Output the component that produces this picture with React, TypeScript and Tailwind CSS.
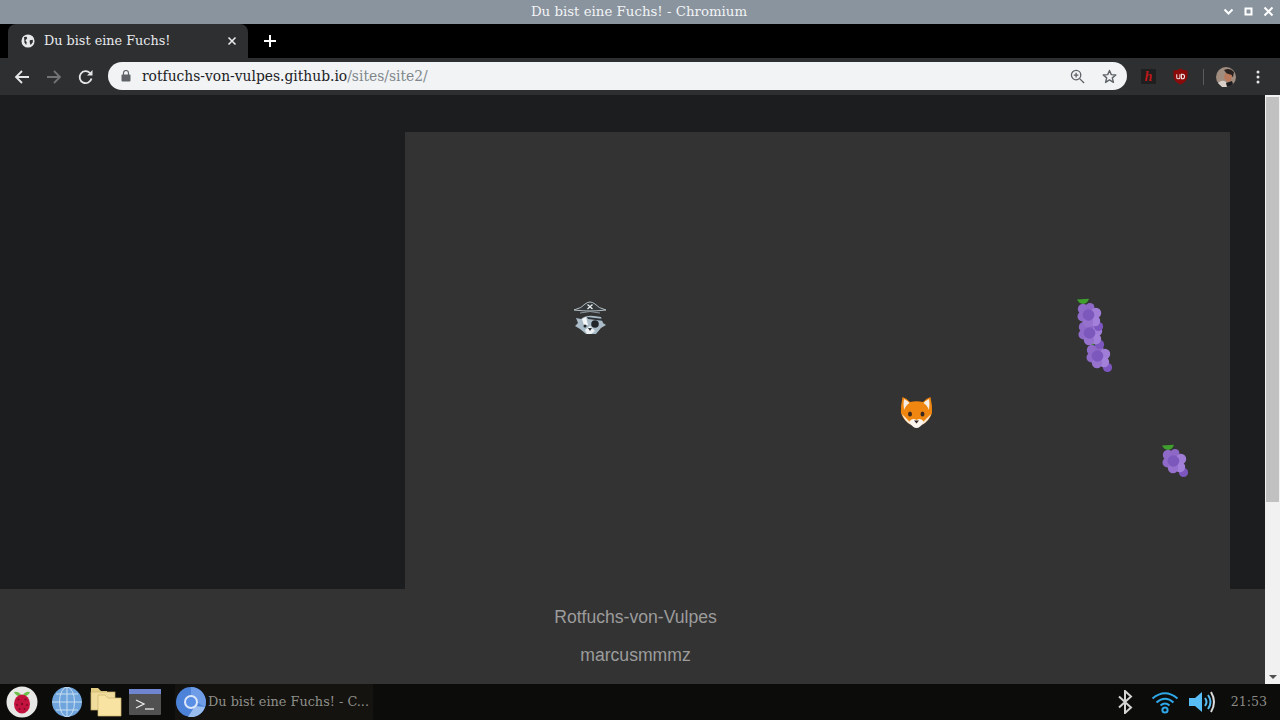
import React from "react";

function Grape({ className }: { className: string }) {
  return (
    <svg viewBox="0 0 28 34" className={className}>
      <path d="M1 1.500 L13 0.800 Q11.500 5.500 7 6 Q3 5.500 1 1.500Z" fill="#3fa02e" />
      <circle cx="22.500" cy="28.500" r="4.600" fill="#7d56c0" />
      <g fill="#9a76d1">
        <circle cx="7" cy="11" r="5.200" fill="#8f6ac8" />
        <circle cx="14" cy="9.500" r="4.500" fill="#8d68c6" />
        <circle cx="20" cy="15" r="5.200" fill="#a07ed8" />
        <circle cx="6.500" cy="18.500" r="5" fill="#8f6ac8" />
        <circle cx="19" cy="23" r="5.200" fill="#a380da" />
        <circle cx="12" cy="24" r="5.200" fill="#9671ce" />
      </g>
      <circle cx="12.500" cy="17" r="5.800" fill="#7c58bd" />
    </svg>
  );
}

function Fox({ className }: { className: string }) {
  return (
    <svg viewBox="0 0 34 34" className={className}>
      <path d="M3.500 1 Q8 2.500 11 6 Q17.500 4.500 24 6 Q27 2.500 31.500 1 Q33.500 10 33 17 Q31 24 24 28 Q17.500 32 11 28 Q4 24 2 17 Q1.500 10 3.500 1Z" fill="#ee860f" />
      <path d="M5 3 Q9 5 10.500 7 Q7 9 5 14 Q4 8 5 3Z M30 3 Q26 5 24.500 7 Q28 9 30 14 Q31 8 30 3Z" fill="#f5efe8" />
      <path d="M3 18 Q6 21 10 25 L12 29 Q5 25 3 18Z M32 18 Q29 21 25 25 L23 29 Q30 25 32 18Z" fill="#fbe7cf" />
      <path d="M10 26 Q13 21 17.500 24 Q22 21 25 26 Q21 32 17.500 32 Q14 32 10 26Z" fill="#fbf6ef" />
      <ellipse cx="11" cy="18" rx="2" ry="2.600" fill="#3b2a22" />
      <ellipse cx="23.500" cy="18" rx="2" ry="2.600" fill="#3b2a22" />
      <path d="M15 24.500 H20 L17.500 27.500Z" fill="#2f2520" />
    </svg>
  );
}

function PirateFox({ className }: { className: string }) {
  return (
    <svg viewBox="0 0 34 36" className={className}>
      <path d="M1 11 Q9 9 12 5 Q17 1 22 5 Q25 9 33 11 Q25 12 17 12 Q9 12 1 11Z" fill="#33383b" stroke="#b4bec4" strokeWidth="1" />
      <path d="M14.500 5.500 L19.500 10 M19.500 5.500 L14.500 10" stroke="#e8edef" strokeWidth="1.300" />
      <path d="M7 14 Q17 11 27 14" fill="none" stroke="#8b969c" strokeWidth="1" />
      <path d="M3 19 L8 20 Q13 16 21 17 L28 18 L30 24 L33 26 L28 29 L23 35 H13 L7 30 L2 27 L5 24Z" fill="#a9bcc7" />
      <path d="M9 20 L13 18 L15 26 L11 26Z" fill="#f4f7f8" />
      <path d="M14 18 L31 20 L31 22 L15 20Z" fill="#2e3236" />
      <circle cx="22" cy="25" r="3.800" fill="#23272a" />
      <circle cx="12" cy="27" r="1.500" fill="#26292c" />
      <path d="M12 31 L17 27 L22 32 L18 35 H14Z" fill="#eef2f4" />
      <path d="M15 29 H19 L17 32Z" fill="#2b2e31" />
    </svg>
  );
}

function Back({ dim }: { dim?: boolean }) {
  return (
    <svg viewBox="0 0 16 16" className="w-4 h-4" fill="none" stroke={dim ? "#727375" : "#e6e7e8"} strokeWidth="1.800">
      <path d="M15 8 H2 M8 2 L2 8 L8 14" />
    </svg>
  );
}

export default function App() {
  return (
    <div className="w-[1280px] h-[720px] flex flex-col overflow-hidden bg-[#1c1d1f] font-['DejaVu_Serif',serif]">
      {/* Window title bar */}
      <div className="h-6 shrink-0 bg-[#8a949e] flex items-center relative">
        <div className="flex-1 text-center pr-[2px] text-[13.35px] leading-6 text-[#f1f3f5]">Du bist eine Fuchs! - Chromium</div>
        <div className="absolute right-[6px] top-[6px] flex gap-[9px] items-center">
          <svg viewBox="0 0 11 11" className="w-[11px] h-[11px]" fill="none" stroke="#fff" strokeWidth="2"><path d="M1.500 3.500 L5.500 7.500 L9.500 3.500" /></svg>
          <svg viewBox="0 0 11 11" className="w-[11px] h-[11px]" fill="none" stroke="#fff" strokeWidth="2"><rect x="2.500" y="2.500" width="6" height="6" /></svg>
          <svg viewBox="0 0 11 11" className="w-[11px] h-[11px]" fill="none" stroke="#fff" strokeWidth="2"><path d="M1.500 1.500 L9.500 9.500 M9.500 1.500 L1.500 9.500" /></svg>
        </div>
      </div>

      {/* Tab strip */}
      <div className="h-[34px] shrink-0 bg-black flex items-end pl-2">
        <div className="w-[240px] h-[34px] bg-[#2e2f31] rounded-t-lg flex items-center pl-[13px] pr-[10px]">
          <svg viewBox="0 0 16 16" className="w-[14px] h-[14px] shrink-0">
            <circle cx="8" cy="8" r="7.500" fill="#e8e9ea" />
            <path d="M3.500 3.500 L6.500 3 L7 5 L5 7 L6.500 9.500 L6 12.500 L4 10Z M10 7 L13.500 6.500 L13.500 9.500 L11 12.500 L10 10Z" fill="#2e2f31" />
          </svg>
          <span className="ml-[9px] flex-1 text-[12.8px] text-[#e8eaed] whitespace-nowrap">Du bist eine Fuchs!</span>
          <svg viewBox="0 0 10 10" className="w-[10px] h-[10px] mr-[1px]" fill="none" stroke="#e8eaed" strokeWidth="1.600"><path d="M1.500 1.500 L8.500 8.500 M8.500 1.500 L1.500 8.500" /></svg>
        </div>
        <svg viewBox="0 0 12 12" className="w-3 h-3 ml-4 mb-[11px]" fill="none" stroke="#fff" strokeWidth="2"><path d="M6 0 V12 M0 6 H12" /></svg>
      </div>

      {/* Toolbar */}
      <div className="h-[37px] shrink-0 bg-[#2e2f31] flex items-center relative">
        <div className="w-[108px] shrink-0 flex items-center pl-[14px] gap-4">
          <Back />
          <div className="rotate-180"><Back dim /></div>
          <svg viewBox="0 0 16 16" className="w-4 h-4" fill="none" stroke="#e6e7e8" strokeWidth="1.800">
            <path d="M13.500 9.500 A6 6 0 1 1 12 4" />
            <path d="M14.500 1 V6.500 H9 Z" fill="#e6e7e8" stroke="none" />
          </svg>
        </div>
        <div className="w-[1019px] h-7 rounded-full bg-[#f1f3f4] flex items-center pl-[13px] pr-[10px] mt-[-1px]">
          <svg viewBox="0 0 10 12" className="w-[10px] h-[12px] shrink-0" fill="none">
            <rect x="0.500" y="4.500" width="9" height="7" rx="1" fill="#5f6368" />
            <path d="M2.500 5 V3 A2.500 2.500 0 0 1 7.500 3 V5" stroke="#5f6368" strokeWidth="1.200" />
          </svg>
          <span className="ml-[11px] flex-1 text-[13.85px] whitespace-nowrap text-[#202124]">
            rotfuchs-von-vulpes.github.io<span className="text-[#80868b]">/sites/site2/</span>
          </span>
          <svg viewBox="0 0 16 16" className="w-[15px] h-[15px]" fill="none" stroke="#5f6368" strokeWidth="1.400">
            <circle cx="6.500" cy="6.500" r="5" />
            <path d="M10 10 L15 15 M4 6.500 H9 M6.500 4 V9" />
          </svg>
          <svg viewBox="0 0 16 16" className="w-[15px] h-[15px] ml-[17px]" fill="none" stroke="#5f6368" strokeWidth="1.500">
            <path d="M8 1.500 L9.900 6 L14.700 6.400 L11 9.500 L12.200 14.300 L8 11.700 L3.800 14.300 L5 9.500 L1.300 6.400 L6.100 6Z" strokeLinejoin="round" />
          </svg>
        </div>
        <div className="flex items-center ml-[14px]">
          <div className="w-[15px] h-[15px] bg-[#1f1f1f] flex items-center justify-center text-[14px] leading-none italic font-bold text-[#c01818] font-['Liberation_Serif',serif]">h</div>
          <svg viewBox="0 0 16 18" className="w-[15px] h-[17px] ml-[17px]">
            <path d="M8 0.500 Q11 2.500 15.500 2.500 V9 Q15 14.500 8 17.500 Q1 14.500 0.500 9 V2.500 Q5 2.500 8 0.500Z" fill="#8b0a0a" />
            <path d="M4 6.500 V10 Q4 11.500 5.700 11.500 Q7.400 11.500 7.400 10 V6.500 M9 6.500 V11.500 H10 Q12.300 11.500 12.300 9 Q12.300 6.500 10 6.500Z" fill="none" stroke="#f3e6e6" strokeWidth="1.100" />
          </svg>
          <div className="w-px h-4 bg-[#5a5b5d] ml-[15px]" />
          <svg viewBox="0 0 20 20" className="w-5 h-5 ml-3">
            <circle cx="10" cy="10" r="10" fill="#a08d80" />
            <path d="M8 3 Q14 0 18 5 L17 10 L11 7Z" fill="#2a2220" />
            <path d="M9 6 L16 8 L15 14 L11 15 L8 11Z" fill="#b8795c" />
            <path d="M2 16 Q6 12 10 15 L12 20 H6Z" fill="#d8d0c8" />
            <path d="M10 16 L16 14 L17 17 Q14 20 11 20Z" fill="#1d1c20" />
          </svg>
          <svg viewBox="0 0 4 14" className="w-1 h-[14px] ml-[20px]" fill="#e6e7e8">
            <circle cx="2" cy="2" r="1.500" /><circle cx="2" cy="7" r="1.500" /><circle cx="2" cy="12" r="1.500" />
          </svg>
        </div>
      </div>

      {/* Viewport */}
      <div className="h-[589px] shrink-0 flex">
        <div className="flex-1 flex flex-col">
          <div className="h-[494px] pt-[37px] pl-[405px] bg-[#1c1d1f]">
            <div className="relative w-[825px] h-[457px] bg-[#333333]">
              <PirateFox className="absolute left-[168px] top-[167px] w-[34px] h-[36px] blur-[0.4px]" />
              <Grape className="absolute left-[680px] top-[207px] w-7 h-[34px] blur-[0.4px]" />
              <Grape className="absolute left-[672px] top-[184px] w-7 h-[34px] blur-[0.4px]" />
              <Grape className="absolute left-[671px] top-[166px] w-7 h-[34px] blur-[0.4px]" />
              <Fox className="absolute left-[494px] top-[264px] w-[34px] h-[34px] blur-[0.4px]" />
              <Grape className="absolute left-[756px] top-[312px] w-7 h-[34px] blur-[0.4px]" />
            </div>
          </div>
          <div className="h-[95px] bg-[#333333] pl-[6px] flex flex-col items-center font-['Liberation_Sans',sans-serif] text-[17.6px] leading-[21px] text-[#9c9c9c]">
            <p className="mt-[18px]">Rotfuchs-von-Vulpes</p>
            <p className="mt-[17px]">marcusmmmz</p>
          </div>
        </div>
        <div className="w-[15px] shrink-0 bg-[#f1f1f1] flex flex-col items-center justify-between py-[5px]">
          <div className="w-0 h-0 border-x-[4px] border-x-transparent border-b-[4px] border-b-[#a3a3a3]" />
          <div className="absolute top-[97px] w-[13px] h-[405px] bg-[#c1c1c1]" />
          <div className="w-0 h-0 border-x-[4px] border-x-transparent border-t-[4px] border-t-[#505050]" />
        </div>
      </div>

      {/* Taskbar */}
      <div className="h-9 shrink-0 bg-[#0c0c0a] flex items-center pl-[6px] relative">
        <svg viewBox="0 0 32 32" className="w-8 h-8 shrink-0">
          <circle cx="16" cy="16" r="15.500" fill="#e8e8e6" />
          <path d="M8 6 Q13 5 15.500 10 Q10 11 8 6Z M24 6 Q19 5 16.500 10 Q22 11 24 6Z" fill="#6cc04a" />
          <ellipse cx="16" cy="18" rx="8" ry="9.500" fill="#c4123f" />
          <g fill="#7a0c28">
            <circle cx="12.500" cy="13.500" r="1" /><circle cx="19.500" cy="13.500" r="1" /><circle cx="16" cy="18" r="1.200" /><circle cx="11" cy="19" r="1" /><circle cx="21" cy="19" r="1" /><circle cx="13.500" cy="23" r="1" /><circle cx="18.500" cy="23" r="1" />
          </g>
        </svg>
        <svg viewBox="0 0 30 30" className="w-[30px] h-[30px] ml-[14px] shrink-0" fill="none">
          <circle cx="15" cy="15" r="15" fill="#6fa5dc" />
          <g stroke="#c9def2" strokeWidth="1">
            <path d="M0 15 H30 M4 7 H26 M4 23 H26 M15 0 V30" />
            <ellipse cx="15" cy="15" rx="7.500" ry="15" />
          </g>
        </svg>
        <svg viewBox="0 0 32 30" className="w-8 h-[30px] ml-2 shrink-0">
          <path d="M1 1 H8 L11 4 H17 V7 H1Z" fill="#e3cd85" />
          <rect x="1" y="5" width="24" height="18" fill="#f0dc9c" stroke="#c9b26c" strokeWidth="0.700" />
          <path d="M8 8 H15 L18 11 H31 V29 H8Z" fill="#f8e3a2" stroke="#cdb670" strokeWidth="0.700" />
        </svg>
        <svg viewBox="0 0 32 26" className="w-8 h-[26px] ml-[7px] shrink-0">
          <rect width="32" height="26" rx="1" fill="#515151" />
          <rect width="32" height="5" fill="#6f85cf" />
          <path d="M7 11 L15 15 L7 19" fill="none" stroke="#ececec" strokeWidth="1.300" />
          <path d="M16 20 H25" stroke="#ececec" strokeWidth="1.300" />
        </svg>
        <div className="ml-[14px] w-[198px] h-9 bg-[#14130f] flex items-center pl-[1px] shrink-0">
          <svg viewBox="0 0 30 30" className="w-[30px] h-[30px] shrink-0">
            <circle cx="15" cy="15" r="15" fill="#4c82d8" />
            <path d="M15 0 A15 15 0 0 1 29 20 L20 15 A5 5 0 0 0 15 9Z" fill="#6f9ce6" />
            <path d="M29 20 A15 15 0 0 1 12 30 L19 19Z" fill="#9abdf0" />
            <circle cx="15" cy="15" r="7" fill="#dce8fa" />
            <circle cx="15" cy="15" r="5" fill="#5a8fe6" />
          </svg>
          <span className="ml-[2px] text-[12.85px] whitespace-nowrap text-[#8e8e8a]">Du bist eine Fuchs! - C...</span>
        </div>
        <div className="ml-auto flex items-center pr-[13px]">
          <svg viewBox="0 0 16 24" className="w-4 h-6" fill="none" stroke="#d4d4d2" strokeWidth="2"><path d="M2 6.500 L14 17.500 L8 23 V1 L14 6.500 L2 17.500" /></svg>
          <svg viewBox="0 0 28 24" className="w-7 h-6 ml-[18px]" fill="none" stroke="#2fa8ea" strokeWidth="2">
            <path d="M1.500 8.500 Q14 -2 26.500 8.500 M5.500 12.500 Q14 5 22.500 12.500 M9.500 15.500 Q14 11.500 18.500 15.500" />
            <circle cx="14" cy="20" r="2.600" strokeWidth="2" />
          </svg>
          <svg viewBox="0 0 28 24" className="w-7 h-6 ml-[9px]" fill="none">
            <path d="M1 8 H7 L14 2 V22 L7 16 H1Z" fill="#58bdf5" />
            <path d="M17 8 Q20 12 17 16" stroke="#58bdf5" strokeWidth="2" />
            <path d="M20 5 Q25 12 20 19" stroke="#58bdf5" strokeWidth="2" />
            <path d="M23 2 Q29 12 23 22" stroke="#dcdcdc" strokeWidth="2" />
          </svg>
          <span className="ml-[15px] text-[12.6px] text-[#8a8a86] leading-none">21:53</span>
        </div>
      </div>
    </div>
  );
}
